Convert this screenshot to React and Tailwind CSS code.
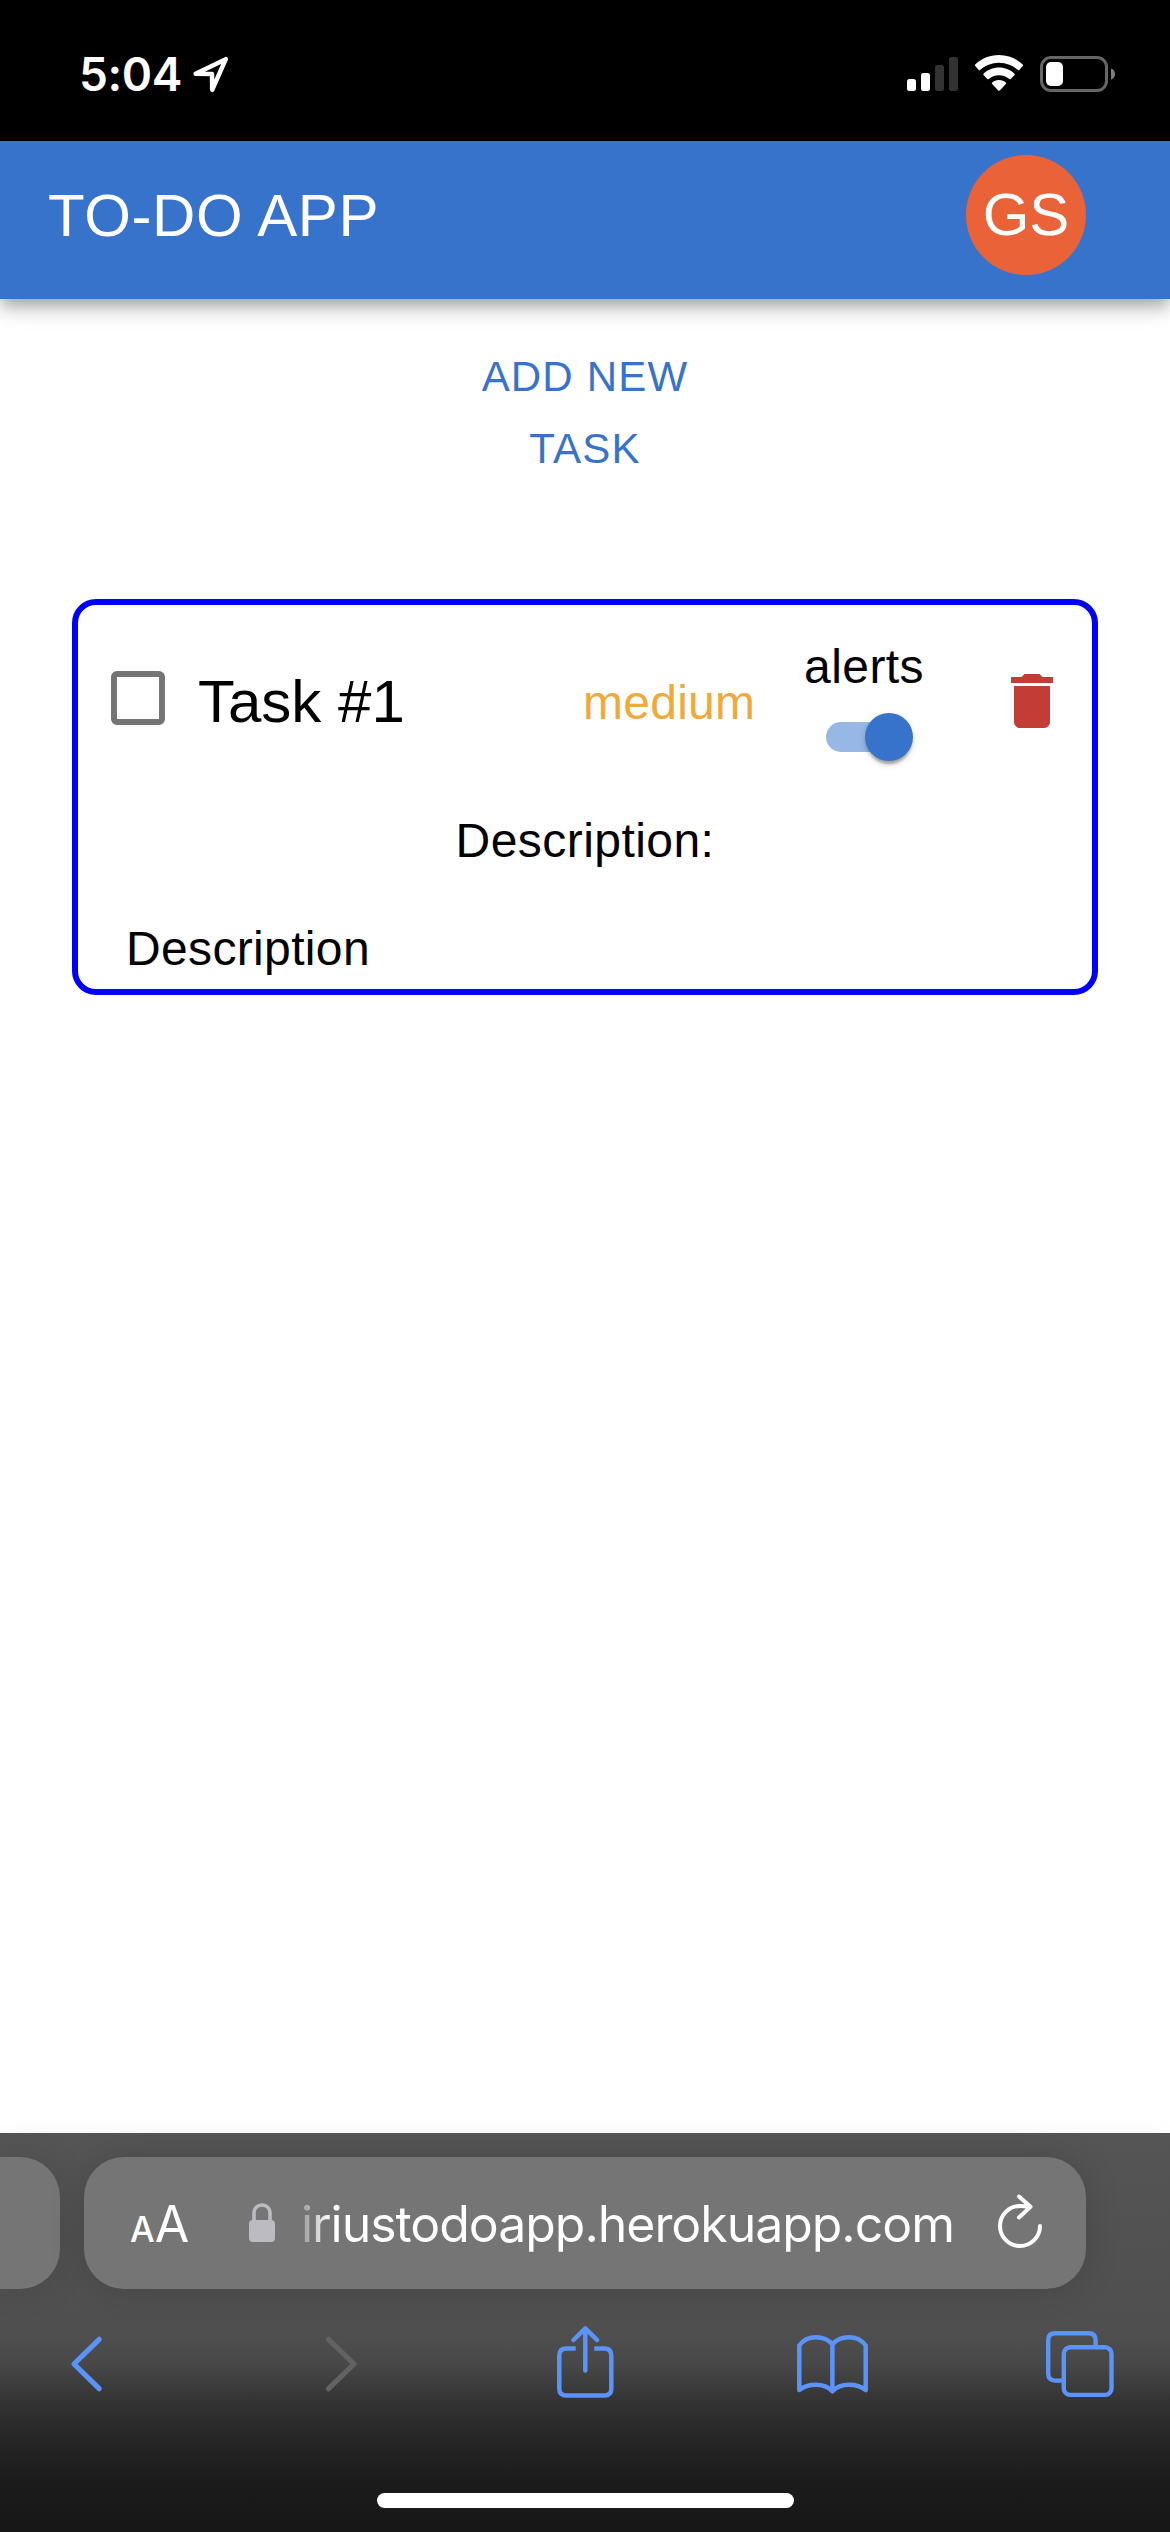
function LocationArrow() {
  return (
    <svg className="mt-[1px] ml-[11px] h-[38px] w-[38px]" viewBox="0 0 38 38" fill="none" stroke="#fff" strokeWidth="4.5" strokeLinejoin="round" strokeLinecap="round">
      <path d="M3.600 17.800 33.800 3.200 20.200 33.800 20 18Z" />
    </svg>
  );
}

function Signal() {
  return (
    <svg className="h-[36px] w-[52px]" viewBox="0 0 52 36">
      <rect x="0" y="22" width="9" height="12" rx="2.5" fill="#fff" />
      <rect x="14" y="16" width="9" height="18" rx="2.5" fill="#fff" />
      <rect x="28" y="8" width="9" height="26" rx="2.5" fill="#333" />
      <rect x="42" y="0" width="9" height="34" rx="2.5" fill="#333" />
    </svg>
  );
}

function Wifi() {
  return (
    <svg className="h-[36px] w-[48px]" viewBox="0 0 48 36" fill="#fff">
      <path d="M24 0C33.400 0 42 3.700 48 9.700Q48.300 10.300 47.700 10.900L44.300 15.100Q43.700 15.700 43 15.100C38 10.500 31.300 7.700 24 7.700S10 10.500 5 15.100Q4.300 15.700 3.700 15.100L.3 10.900Q-.3 10.300 0 9.700C6 3.700 14.600 0 24 0Z" />
      <path d="M24 12.600C30 12.600 35.500 14.900 39.500 18.700Q40 19.300 39.500 19.900L35.700 24.100Q35 24.600 34.400 24.100C31.600 21.600 28 20.200 24 20.200S16.400 21.600 13.600 24.100Q13 24.600 12.300 24.100L8.500 19.900Q8 19.300 8.500 18.700C12.500 14.900 18 12.600 24 12.600Z" />
      <path d="M24 25C26.700 25 29.200 26 31 27.700Q31.400 28.300 31 28.800L24.800 35.400Q24 36.200 23.200 35.400L17 28.800Q16.600 28.300 17 27.700C18.800 26 21.300 25 24 25Z" />
    </svg>
  );
}

function Battery() {
  return (
    <svg className="h-[36px] w-[76px]" viewBox="0 0 76 36">
      <rect x="1.500" y="1.500" width="65" height="33" rx="9.500" fill="none" stroke="#666" strokeWidth="3" />
      <rect x="6" y="6" width="17" height="24" rx="5" fill="#fff" />
      <path d="M71 12.500C73.500 13.300 75 15.500 75 18S73.500 22.700 71 23.500Z" fill="#808080" />
    </svg>
  );
}

function StatusBar() {
  return (
    <div className="flex h-[141px] items-start justify-between bg-black pt-[55px] pr-[54px] pl-[79px]">
      <div className="flex items-start">
        <span className="-mt-px w-[102px] font-[Inter,sans-serif] text-[46px] leading-[40px] font-semibold tracking-[-0.4px] whitespace-nowrap text-white">5:04</span>
        <LocationArrow />
      </div>
      <div className="flex items-start">
        <div className="mt-[2px] mr-[16px] h-[36px]"><Signal /></div>
        <Wifi />
        <div className="mt-[1px] ml-[17px] h-[36px]"><Battery /></div>
      </div>
    </div>
  );
}

function AppBar() {
  return (
    <header className="relative flex h-[158px] items-start justify-between bg-[#3873cb] pt-[14px] pr-[84px] pl-[48px] text-[60px] text-white shadow-[0_6px_12px_-3px_rgba(0,0,0,0.2),0_12px_15px_rgba(0,0,0,0.14),0_3px_30px_rgba(0,0,0,0.12)]">
      <h1 className="leading-[121px] tracking-[0.6px]">TO-DO APP</h1>
      <div className="flex h-[120px] w-[120px] items-center justify-center rounded-full bg-[#ea6338] leading-[60px]">GS</div>
    </header>
  );
}

function Toggle() {
  return (
    <div className="mt-[16px] flex h-[48px] w-[87px] items-center">
      <div className="h-[30px] w-[78px] shrink-0 rounded-full bg-[#97b8e5]" />
      <div className="-ml-[39px] h-[48px] w-[48px] shrink-0 rounded-full bg-[#3873cb] shadow-[0_6px_3px_-3px_rgba(0,0,0,0.2),0_3px_3px_rgba(0,0,0,0.14),0_3px_9px_rgba(0,0,0,0.12)]" />
    </div>
  );
}

function TaskCard() {
  return (
    <section className="mx-[72px] mt-[114px] flex h-[396px] flex-col rounded-[24px] border-[6px] border-[#0000f5] text-[48px] text-black">
      <div className="flex h-[192px] items-start pl-[33px]">
        <div className="mt-[66px] h-[54px] w-[54px] rounded-[6px] border-[6px] border-[#757575]" />
        <h2 className="mt-[62px] ml-[33px] w-[385px] text-[60px] leading-[70px]">Task #1</h2>
        <span className="mt-[68px] w-[221px] leading-[60px] tracking-[0.25px] text-[#f0a93c]">medium</span>
        <div className="mt-[32px] flex w-[120px] flex-col">
          <span className="leading-[60px] tracking-[0.45px]">alerts</span>
          <div className="pl-[22px]"><Toggle /></div>
        </div>
        <svg className="mt-[60px] ml-[72px] h-[72px] w-[72px]" viewBox="0 0 24 24" fill="#c33c36">
          <path d="M6 19c0 1.100.9 2 2 2h8c1.100 0 2-.9 2-2V7H6v12zM19 4h-3.500l-1-1h-5l-1 1H5v2h14V4z" />
        </svg>
      </div>
      <p className="mt-[14px] text-center leading-[60px] tracking-[0.45px]">Description:</p>
      <p className="mt-[48px] pl-[48px] leading-[60px] tracking-[0.35px]">Description</p>
    </section>
  );
}

function AddressBar() {
  return (
    <div className="flex h-[132px] gap-[24px]">
      <div className="h-[132px] w-[60px] rounded-r-[40px] bg-[#757575] shadow-[0_0_36px_rgba(0,0,0,0.1)]" />
      <div className="flex h-[132px] w-[1002px] items-start rounded-[40px] bg-[#757575] pt-[37px] pl-[46px] text-white shadow-[0_0_36px_rgba(0,0,0,0.14)]">
        <div className="flex h-[60px] w-[119px] items-baseline font-[Inter,sans-serif] leading-[60px]">
          <span className="text-[35px] font-medium">A</span>
          <span className="text-[50px]">A</span>
        </div>
        <svg className="mt-[9px] h-[39px] w-[26px]" viewBox="0 0 26 39">
          <path d="M5 18V10.500C5 5 8.500 2 13 2s8 3 8 8.500V18" fill="none" stroke="#bcbbc1" strokeWidth="3.600" />
          <rect x="0" y="17" width="26" height="22" rx="4" fill="#bcbbc1" />
        </svg>
        <span className="ml-[26px] w-[660px] bg-linear-to-r from-white/40 from-[6px] to-white to-[28px] bg-clip-text font-[Inter,sans-serif] text-[50px] leading-[60px] tracking-[-1.05px] whitespace-nowrap text-transparent">iriustodoapp.herokuapp.com</span>
        <svg className="ml-[35px] h-[56px] w-[48px]" viewBox="0 0 48 56" fill="none" stroke="#fff" strokeWidth="4" strokeLinecap="round" strokeLinejoin="round">
          <path d="M44 32A20 20 0 1 1 24 12Q28 12 34 12.700M23 2.500 34.500 12.700 23 23.500" />
        </svg>
      </div>
    </div>
  );
}

function Toolbar() {
  return (
    <div className="flex h-[100px] items-start pt-[34px] pl-[69px]">
      <svg className="mt-[12px] mr-[220px] h-[58px] w-[36px]" viewBox="0 0 36 58" fill="none" stroke="#5b93f8" strokeWidth="5.200" strokeLinecap="round" strokeLinejoin="round"><path d="M30.200 4.300 5 29 30.200 53.700" /></svg>
      <svg className="mt-[12px] mr-[196px] h-[58px] w-[36px]" viewBox="0 0 36 58" fill="none" stroke="#626262" strokeWidth="5.200" strokeLinecap="round" strokeLinejoin="round"><path d="M3.500 4.300 29 29 3.500 53.700" /></svg>
      <svg className="mr-[182px] h-[76px] w-[58px]" viewBox="0 0 58 76" fill="none" stroke="#5b93f8" strokeWidth="4.500" strokeLinecap="round" strokeLinejoin="round">
        <path d="M18.700 25.500H9.300q-7 0-7 7v33q0 7 7 7h38q7 0 7-7v-33q0-7-7-7H37.300" strokeLinecap="butt" />
        <path d="M28.300 47.500V6M16.500 17 28.300 5.300 40.100 17" />
      </svg>
      <svg className="mt-[10px] mr-[177px] h-[62px] w-[72px]" viewBox="0 0 72 62" fill="none" stroke="#5b93f8" strokeWidth="4.500" strokeLinecap="round" strokeLinejoin="round">
        <path d="M35.400 11.500C31.500 6.800 25.500 4.300 18.900 4.300S6 7.300 2.300 12.500V57C6.500 53.500 12 51.700 18.900 51.700S31.500 54 35.400 58.300C39.300 54 45 51.700 51.900 51.700S64.500 53.500 68.700 57V12.500C65 7.300 58.500 4.300 51.900 4.300S39.300 6.800 35.400 11.500V58.300" />
      </svg>
      <svg className="mt-[8px] h-[68px] w-[68px]" viewBox="0 0 68 68" fill="none" stroke="#5b93f8" strokeWidth="4.400">
        <path d="M49.600 15V9.200q0-7-7-7H9.200q-7 0-7 7v33.400q0 7 7 7h7.500" />
        <rect x="17.800" y="16.200" width="47.700" height="47.700" rx="6.500" />
      </svg>
    </div>
  );
}

export default function App() {
  return (
    <div className="flex h-[2532px] w-[1170px] flex-col overflow-hidden bg-white font-['Liberation_Sans',Arial,sans-serif]">
      <StatusBar />
      <AppBar />
      <main className="flex h-[1834px] flex-col">
        <button className="mt-[42px] self-center text-center text-[42px] leading-[72px] tracking-[1.2px] text-[#3873cb]">
          <span className="block">ADD NEW</span>
          <span className="block">TASK</span>
        </button>
        <TaskCard />
      </main>
      <footer className="relative flex h-[399px] flex-col items-stretch bg-[linear-gradient(#555_0,#505050_160px,#4f4f4f_200px,#484848_230px,#303030_275px,#222_320px,#1b1b1b_350px,#171717_396px)] pt-[24px] shadow-[0_-2px_20px_rgba(0,0,0,0.03)]">
        <AddressBar />
        <Toolbar />
        <div className="mt-[104px] ml-[377px] h-[15px] w-[417px] rounded-full bg-white" />
      </footer>
    </div>
  );
}
